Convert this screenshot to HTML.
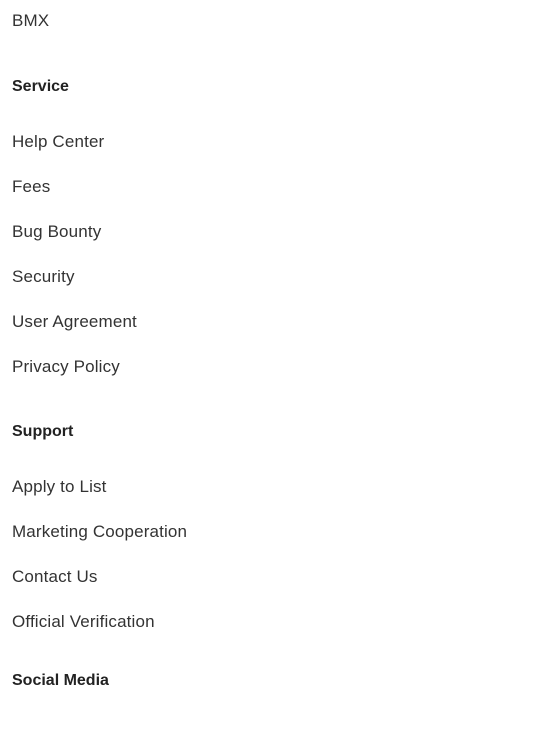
<!DOCTYPE html>
<html><head><meta charset="utf-8"><style>
html,body{margin:0;padding:0;background:#fff;width:548px;height:730px;overflow:hidden}
body{position:relative;font-family:"Liberation Sans",sans-serif}
.t{position:absolute;left:12px;font-size:17px;line-height:20px;color:#333;letter-spacing:0.15px;white-space:nowrap}
.h{font-weight:bold;color:#222;letter-spacing:0;font-size:16px}
</style></head><body>
<div class="t" style="top:11px">BMX</div>
<div class="t h" style="top:77px">Service</div>
<div class="t" style="top:132px">Help Center</div>
<div class="t" style="top:177px">Fees</div>
<div class="t" style="top:222px">Bug Bounty</div>
<div class="t" style="top:267px">Security</div>
<div class="t" style="top:312px">User Agreement</div>
<div class="t" style="top:357px">Privacy Policy</div>
<div class="t h" style="top:422px">Support</div>
<div class="t" style="top:477px">Apply to List</div>
<div class="t" style="top:522px">Marketing Cooperation</div>
<div class="t" style="top:567px">Contact Us</div>
<div class="t" style="top:612px">Official Verification</div>
<div class="t h" style="top:671px">Social Media</div>
</body></html>
